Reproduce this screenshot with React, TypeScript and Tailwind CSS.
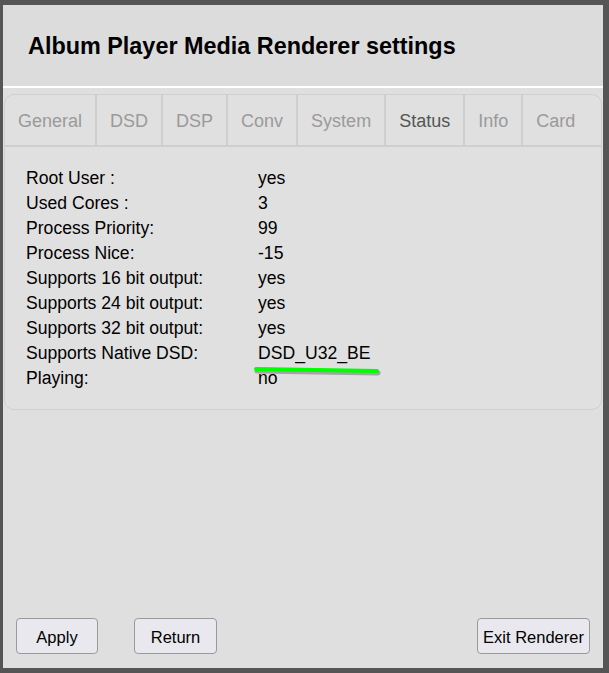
import React from "react";

const tabs = ["General", "DSD", "DSP", "Conv", "System", "Status", "Info", "Card"];
const rows: [string, string][] = [
  ["Root User :", "yes"],
  ["Used Cores :", "3"],
  ["Process Priority:", "99"],
  ["Process Nice:", "-15"],
  ["Supports 16 bit output:", "yes"],
  ["Supports 24 bit output:", "yes"],
  ["Supports 32 bit output:", "yes"],
  ["Supports Native DSD:", "DSD_U32_BE"],
  ["Playing:", "no"],
];

export default function App() {
  return (
    <div
      className="w-[609px] h-[673px] bg-[#555555] pt-[5px] pl-[3px] pr-[6px] pb-[5px]"
      style={{ fontFamily: '"Liberation Sans", Arial, sans-serif' }}
    >
      <div className="relative flex h-full flex-col bg-[#dfdfdf]">
        <div className="h-[83px] border-b-2 border-white bg-[#dcdcdc] pl-[25px] pt-[26px]">
          <h1 className="text-[23.4px] font-bold leading-[30px] text-black">
            Album Player Media Renderer settings
          </h1>
        </div>
        <div className="mx-px mt-[6px] rounded-[10px] border border-[#cfcfcf] bg-[#e0e0e0]">
          <div className="flex h-[52px] border-b-2 border-[#cfcfcf]">
            {tabs.map((t, i) => (
              <div
                key={t}
                className={
                  "flex items-center px-[13px] pt-[2px] text-[18px] " +
                  (i < tabs.length - 1 ? "border-r-2 border-[#cfcfcf] " : "") +
                  (t === "Status" ? "text-[#555555]" : "text-[#9a9a9a]")
                }
              >
                {t}
              </div>
            ))}
          </div>
          <div className="pl-[21px] pt-[19px] pb-[18px]">
            {rows.map(([k, v]) => (
              <div key={k} className="flex h-[25px] items-center text-[17.6px] text-black">
                <div className="w-[232px]">{k}</div>
                <div>{v}</div>
              </div>
            ))}
          </div>
        </div>
        <svg
          className="absolute left-[248px] top-[360px]"
          width="130"
          height="14"
          viewBox="0 0 130 14"
        >
          <path d="M6 6 L127 8" stroke="#333" strokeOpacity="0.35" strokeWidth="5" strokeLinecap="round" />
          <path d="M5 4 L126 6" stroke="#00ff00" strokeWidth="4" strokeLinecap="round" />
        </svg>
        <div className="mt-auto flex items-center px-[13px] pb-[14px]">
          <button className="h-[36px] w-[82px] rounded-[4px] border border-[#9a9a9a] bg-[#e9e8ee] pt-[2px] text-[16.5px] text-black">
            Apply
          </button>
          <button className="ml-[36px] h-[36px] w-[83px] rounded-[4px] border border-[#9a9a9a] bg-[#e9e8ee] pt-[2px] text-[16.5px] text-black">
            Return
          </button>
          <button className="ml-auto h-[36px] w-[113px] rounded-[4px] border border-[#9a9a9a] bg-[#e9e8ee] pt-[2px] text-[16.5px] text-black">
            Exit Renderer
          </button>
        </div>
      </div>
    </div>
  );
}
